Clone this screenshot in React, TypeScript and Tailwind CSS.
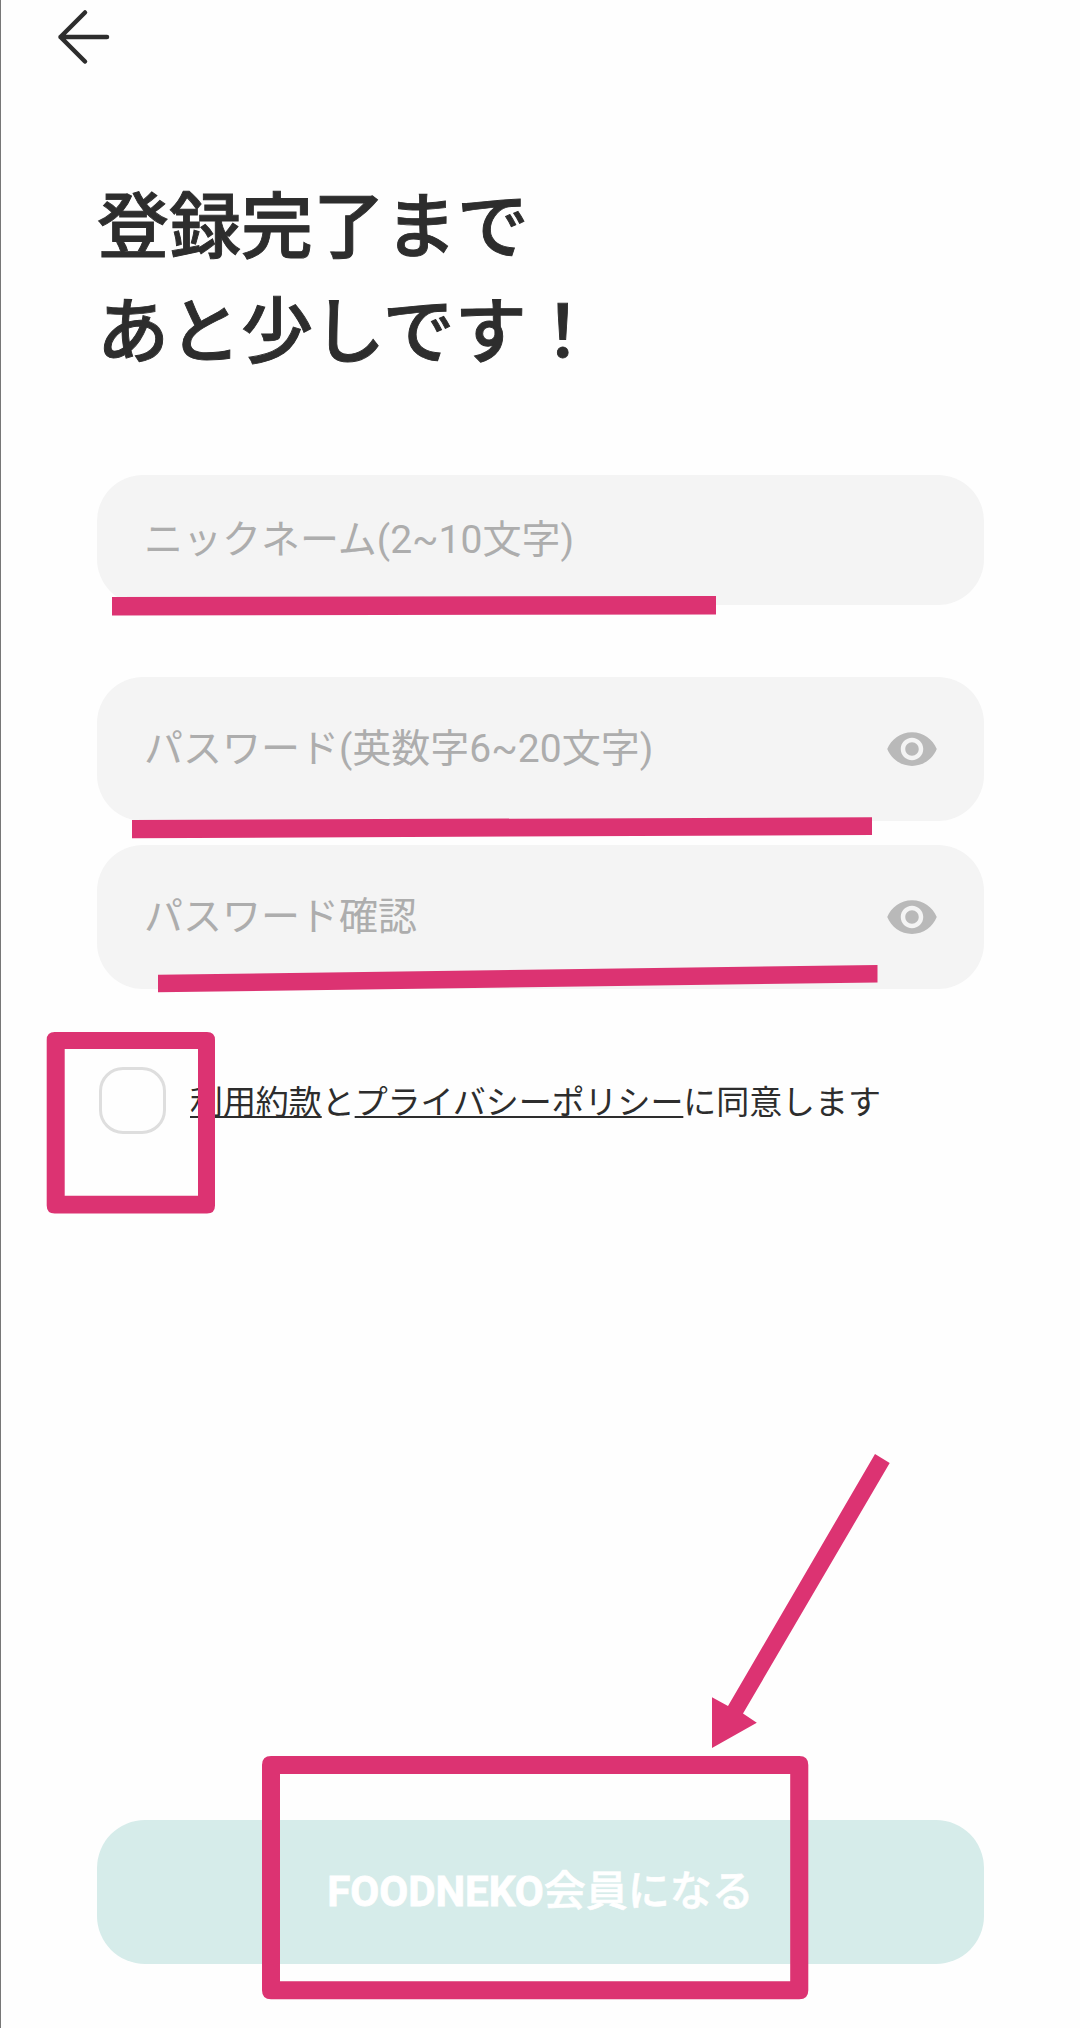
import React from 'react';
import { MdVisibility } from 'react-icons/md';

interface FieldProps {
  label: string;
  className?: string;
  secret?: boolean;
}

const Field: React.FC<FieldProps> = ({ label, className = '', secret = false }) => (
  <div
    className={`flex items-center justify-between rounded-[46px] bg-[#f4f4f4] pl-[47px] pr-[45px] text-[39px] text-[#adadad] ${className}`}
  >
    <span className="whitespace-nowrap leading-none">{label}</span>
    {secret && <MdVisibility className="size-[54px] text-[#b9b9b9]" />}
  </div>
);

/**
 * Pink markup drawn over the form: underlines, two frames and an arrow.
 */
const Annotations: React.FC = () => (
  <svg
    className="pointer-events-none absolute top-0 -left-px z-10"
    width="1080"
    height="2028"
    viewBox="0 0 1080 2028"
    fill="#dc3372"
  >
    {/* Underlines below the three fields */}
    <path d="M112 597 L716 596 V614.5 L112 615.5 Z" />
    <path d="M132 820 L872 817.3 V835 L132 838.3 Z" />
    <path d="M158 974.8 L877.5 965 V982.5 L158 992.3 Z" />

    {/* Frame round the checkbox */}
    <path
      fillRule="evenodd"
      d="M54.7 1032 H207 Q215 1032 215 1040 V1205.5 Q215 1213.5 207 1213.5 H54.7 Q46.7 1213.5 46.7 1205.5 V1040 Q46.7 1032 54.7 1032 Z M64.7 1049 V1195.7 H198 V1049 Z"
    />

    {/* Frame round the submit button */}
    <path
      fillRule="evenodd"
      d="M271 1756 H799.3 Q808.3 1756 808.3 1765 V1990.3 Q808.3 1999.3 799.3 1999.3 H271 Q262 1999.3 262 1990.3 V1765 Q262 1756 271 1756 Z M280 1774 V1981.2 H790.2 V1774 Z"
    />

    {/* Arrow */}
    <path d="M875 1454 L889.7 1463 L743 1713.5 L756.8 1722.7 L712 1748 V1697.3 L728 1706 Z" />
  </svg>
);

const App: React.FC = () => {
  return (
    <main className="relative flex h-[2028px] w-[1080px] flex-col overflow-hidden border-l border-[#777] bg-[#fefefe] pl-24 pr-24 font-['Roboto','Noto_Sans_CJK_JP',sans-serif] text-[#2d2d2d]">
      <header className="-ml-[41px] flex h-[74px] items-center">
        <svg
          width="56"
          height="56"
          viewBox="0 0 56 56"
          fill="none"
          stroke="currentColor"
          strokeWidth="4.5"
          strokeLinecap="round"
          strokeLinejoin="round"
        >
          <path d="M51 28H4.5M29 3.5L4.5 28L29 52.5" />
        </svg>
      </header>

      <h1 className="mt-[101px] text-[72px] font-medium leading-[105px] [-webkit-text-stroke:0.9px_#2d2d2d]">
        登録完了まで
        <br />
        あと少しです！
      </h1>

      <form className="mt-[90px] flex flex-col">
        <Field label="ニックネーム(2~10文字)" className="h-[130px]" />
        <Field label="パスワード(英数字6~20文字)" className="mt-[72px] h-36" secret />
        <Field label="パスワード確認" className="mt-6 h-36" secret />

        <label className="mt-[78px] flex items-center">
          <span className="ml-[2px] size-[67px] rounded-[24px] border-3 border-[#dedede]" />
          <span className="ml-6 whitespace-nowrap pt-1 text-[33px] leading-none tracking-[-0.07px]">
            <span className="underline decoration-2 underline-offset-[2px] [text-decoration-skip-ink:none]">利用約款</span>
            と
            <span className="underline decoration-2 underline-offset-[2px] [text-decoration-skip-ink:none]">プライバシーポリシー</span>
            に同意します
          </span>
        </label>
      </form>

      <button
        type="button"
        className="mt-auto mb-16 flex h-36 shrink-0 items-center justify-center rounded-[48px] bg-[#d6ecea] text-[42px] leading-none text-white"
      >
        <span className="font-bold [-webkit-text-stroke:0.8px_white]">FOODNEKO</span>
        <span className="font-medium [-webkit-text-stroke:0.6px_white]">会員になる</span>
      </button>

      <Annotations />
    </main>
  );
};

export default App;
